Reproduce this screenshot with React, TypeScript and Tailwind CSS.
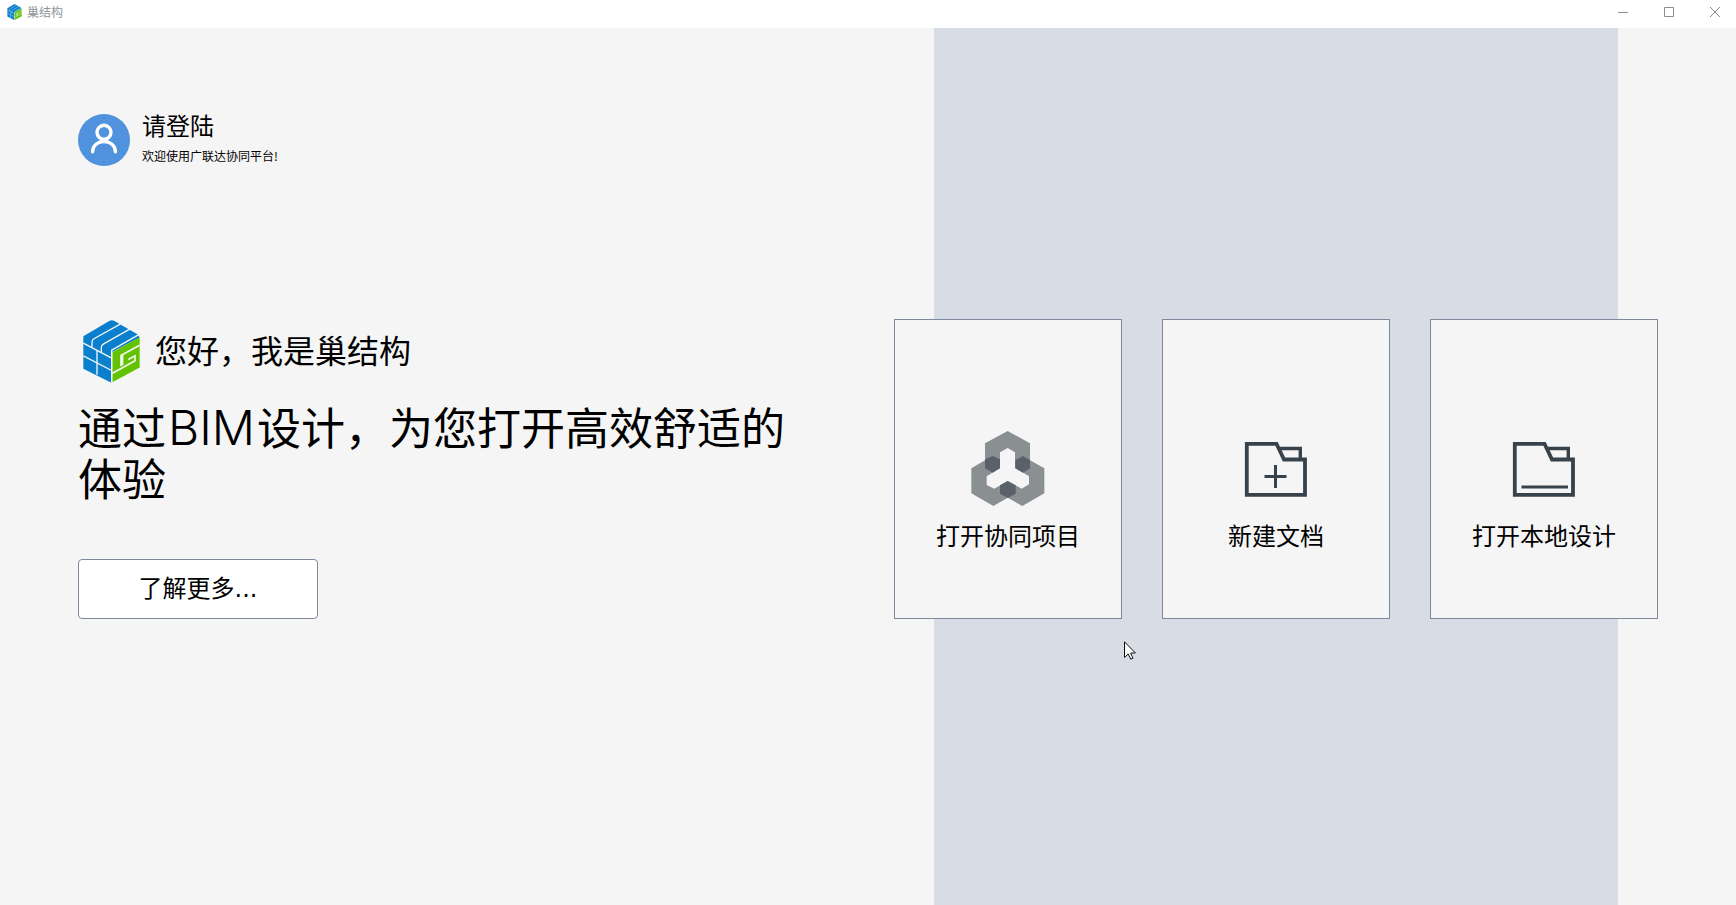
import type { ReactNode } from "react";

function CubeLogo({ className }: { className: string }) {
  return (
    <svg className={className} viewBox="0 0 171 189" aria-hidden="true">
      <path
        fill="#0a7fcd"
        d="M1 50 L80 4 Q86 0 93 4 L163 44 L170 54 L86 98 V188 L82 188 L1 148 Z"
      />
      <path fill="#62c400" d="M88 98 L170 53 V144 L88 188 Z" />
      <g fill="none" stroke="#f5f5f5" strokeWidth="4">
        <path d="M113 13 L34 57 Q27 61 27 68 V84" />
        <path d="M140 29 L62 73 Q55 77 55 84 V99" />
        <path d="M1 71 L86 116" />
        <path d="M1 109 L86 153" />
        <path d="M42 92 V166" />
        <path d="M166 46 L86 92 V188" />
        <path strokeWidth="5" d="M170 77 L115 107 V138" />
        <path strokeWidth="5" d="M87 162 L156 124 V109 L136 120" />
      </g>
      <path fill="#f5f5f5" d="M112 107 L121 103 V136 L112 141 Z" />
    </svg>
  );
}

function PersonIcon() {
  return (
    <svg className="size-13" viewBox="0 0 52 52" fill="none" aria-hidden="true">
      <circle cx="26" cy="26" r="26" fill="#5092dd" />
      <g stroke="#fff" strokeWidth="3.4" strokeLinecap="round">
        <circle cx="26" cy="18.3" r="7" />
        <path d="M14.6 37.8 C15 24 37 24 37.4 37.8" />
      </g>
    </svg>
  );
}

function ProjectIcon() {
  return (
    <svg className="h-[75px] w-[74px]" viewBox="0 0 222 225" aria-hidden="true">
      <path
        fill="#8a8f92"
        d="M110 0 L177 37 V88 L220 112 V187 L154 225 L110 200 L67 225 L1 187 V112 L42 88 V37 Z"
      />
      <path
        fill="#f5f5f5"
        d="M110 51 L132 64 V111 L174 136 V160 L152 173 L110 150 L70 173 L47 162 V136 L87 111 V64 Z"
      />
      <g fill="#5a616b">
        <path d="M65 75 L87 85 V112 L65 125 L42 112 V85 Z" />
        <path d="M156 75 L177 87 V112 L156 125 L133 112 V87 Z" />
        <path d="M110 150 L134 163 V188 L110 201 L87 188 V163 Z" />
      </g>
    </svg>
  );
}

function FolderIcon({ children }: { children: ReactNode }) {
  return (
    <svg
      className="h-[75px] w-[74px]"
      viewBox="0 0 74 75"
      fill="none"
      stroke="#38424a"
      strokeWidth="3.8"
      aria-hidden="true"
    >
      <path d="M7.8 12.8 H37.5 L45 28.5 H66 V63.8 H7.8 Z" />
      <path d="M40 17.5 H61.3 V28" strokeWidth="3.4" />
      {children}
    </svg>
  );
}

function ActionCard({ icon, label }: { icon: ReactNode; label: string }) {
  return (
    <button
      type="button"
      className="flex h-[300px] w-[228px] flex-col items-center gap-3 border border-[#7e8a9c] bg-[#f5f5f5] pt-[111px]"
    >
      {icon}
      <span className="text-2xl leading-[34px]">{label}</span>
    </button>
  );
}

function TitleBar() {
  return (
    <header className="flex h-7 items-center justify-between bg-white pr-4 pb-1 pl-[7px] text-[#8f9499]">
      <div className="flex items-center gap-[5px]">
        <CubeLogo className="h-4 w-[15px]" />
        <span className="text-xs leading-4">巢结构</span>
      </div>
      <div className="flex gap-9">
        <button type="button" aria-label="最小化">
          <svg className="size-[10px]" viewBox="0 0 10 10" stroke="#8f8f8f">
            <path d="M0 5.5 H10" />
          </svg>
        </button>
        <button type="button" aria-label="最大化">
          <svg className="size-[10px]" viewBox="0 0 10 10" stroke="#8f8f8f" fill="none">
            <path d="M.5 .5 H9.5 V9.5 H.5 Z" />
          </svg>
        </button>
        <button type="button" aria-label="关闭">
          <svg className="size-[10px]" viewBox="0 0 10 10" stroke="#85858a">
            <path d="M0 0 L10 10 M10 0 L0 10" />
          </svg>
        </button>
      </div>
    </header>
  );
}

export default function App() {
  return (
    <div className="flex min-h-screen flex-col bg-[#f5f5f5] font-['Noto_Sans_CJK_SC',sans-serif] text-black">
      <TitleBar />
      <main className="grid flex-1 grid-cols-[1fr_auto] gap-x-20 px-[78px]">
        <div>
          <section className="flex gap-3 pt-[86px]">
            <PersonIcon />
            <div>
              <h2 className="text-2xl leading-[22px]">请登陆</h2>
              <p className="mt-[10px] text-xs leading-5">欢迎使用广联达协同平台!</p>
            </div>
          </section>
          <section className="pt-[153px]">
            <div className="flex items-start gap-[15px] pl-[5px]">
              <CubeLogo className="h-[64px] w-[57px]" />
              <h1 className="text-[32px] leading-[60px]">您好，我是巢结构</h1>
            </div>
            <p className="mt-[18px] text-[44px] leading-[51px]">
              通过
              <span className="mx-[2px] font-['Inter'] text-[48px] leading-10 font-light">BIM</span>
              设计，为您打开高效舒适的体验
            </p>
            <button
              type="button"
              className="mt-14 flex h-[60px] w-60 justify-center rounded-[4px] border border-[#7e8a9c] bg-white font-['DejaVu_Sans','Noto_Sans_CJK_SC',sans-serif] text-2xl leading-[58px]"
            >
              了解更多...
            </button>
          </section>
        </div>
        <div className="grid">
          <div className="col-start-1 row-start-1 mx-10 bg-[#d8dce4]" />
          <div className="relative col-start-1 row-start-1 mt-[291px] flex gap-10 self-start">
            <ActionCard icon={<ProjectIcon />} label="打开协同项目" />
            <ActionCard
              icon={
                <FolderIcon>
                  <path d="M25.5 45.5 H47.5 M36.5 34 V57" strokeWidth="3" />
                </FolderIcon>
              }
              label="新建文档"
            />
            <ActionCard
              icon={
                <FolderIcon>
                  <path d="M14.5 56 H61" strokeWidth="3.2" />
                </FolderIcon>
              }
              label="打开本地设计"
            />
            <svg
              className="absolute top-[322px] left-[230px] h-[19px] w-3"
              viewBox="0 0 12 19"
              aria-hidden="true"
            >
              <path
                d="M.5 .8 V16.5 L4.2 13 L6.8 18.2 L9 17.2 L6.6 12 H11.4 Z"
                fill="#fff"
                stroke="#111"
              />
            </svg>
          </div>
        </div>
      </main>
    </div>
  );
}
